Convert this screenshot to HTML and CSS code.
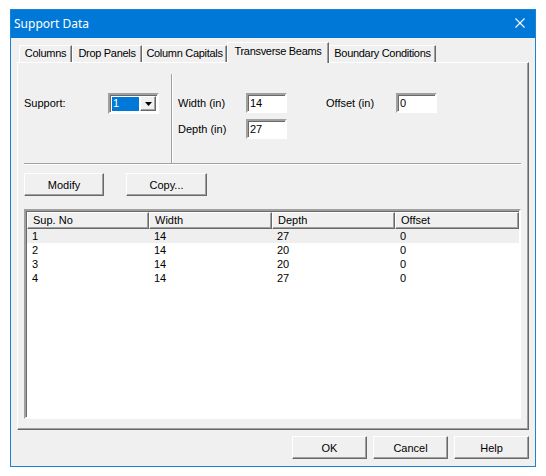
FILE: index.html
```html
<!DOCTYPE html>
<html lang="en">

<head>
    <meta charset="UTF-8">
    <title>Support Data</title>
    <link rel="stylesheet" href="styles.css">
</head>

<body>
    <div class="window">
        <div class="titlebar">
            <span class="title">Support Data</span>
            <svg class="close" width="10" height="10" viewBox="0 0 10 10">
                <path d="M0.5 0.5L9.5 9.5M9.5 0.5L0.5 9.5" stroke="#fff" stroke-width="1.1" fill="none"/>
            </svg>
        </div>
        <div class="client">
            <div class="tabs">
                <div class="tab">Columns</div>
                <div class="tab">Drop Panels</div>
                <div class="tab">Column Capitals</div>
                <div class="tab active">Transverse Beams</div>
                <div class="tab">Boundary Conditions</div>
            </div>
            <div class="panel">
                <div class="top">
                    <div class="support">
                        <span class="support-label">Support:</span>
                        <div class="combo">
                            <span class="combo-value">1</span>
                            <span class="combo-btn">
                                <svg width="7" height="4" viewBox="0 0 7 4"><polygon points="0,0 7,0 3.5,4" fill="#000"/></svg>
                            </span>
                        </div>
                    </div>
                    <div class="dims">
                        <span>Width (in)</span>
                        <div class="field">14</div>
                        <span></span>
                        <span>Offset (in)</span>
                        <div class="field">0</div>
                        <span>Depth (in)</span>
                        <div class="field">27</div>
                    </div>
                </div>
                <div class="actions">
                    <button class="btn">Modify</button>
                    <button class="btn copy">Copy...</button>
                </div>
                <div class="list">
                    <div class="list-head">
                        <div class="hcell">Sup. No</div>
                        <div class="hcell">Width</div>
                        <div class="hcell">Depth</div>
                        <div class="hcell">Offset</div>
                    </div>
                    <div class="row focused"><span>1</span><span>14</span><span>27</span><span>0</span></div>
                    <div class="row"><span>2</span><span>14</span><span>20</span><span>0</span></div>
                    <div class="row"><span>3</span><span>14</span><span>20</span><span>0</span></div>
                    <div class="row"><span>4</span><span>14</span><span>27</span><span>0</span></div>
                </div>
            </div>
            <div class="footer">
                <button class="btn">OK</button>
                <button class="btn">Cancel</button>
                <button class="btn">Help</button>
            </div>
        </div>
    </div>
</body>

</html>
```

FILE: styles.css
```css
* {
    box-sizing: border-box;
}

body {
    margin: 0;
    background: #fff;
    font-family: "Liberation Sans", Arial, sans-serif;
    font-size: 11px;
    color: #000;
}

.window {
    margin: 9px 0 0 10px;
    width: 526px;
    height: 458px;
    border: 1px solid #1883d7;
    background: #f0f0f0;
    display: flex;
    flex-direction: column;
}

.titlebar {
    height: 28px;
    background: #0078d7;
    color: #fff;
    display: flex;
    align-items: center;
    justify-content: space-between;
    padding: 0 10px 2px 3px;
}

.title {
    font-family: "Noto Sans", sans-serif;
    font-size: 12px;
}

.client {
    flex: 1;
    padding: 4px 6px 0 6px;
}

/* tab strip */
.tabs {
    display: flex;
    align-items: flex-end;
    height: 20px;
    padding-left: 2px;
}

.tab {
    height: 17px;
    line-height: 15px;
    text-align: center;
    white-space: nowrap;
    letter-spacing: -0.3px;
    border: 1px solid;
    border-color: #fff #696969 transparent #fff;
    border-bottom: none;
    box-shadow: inset -1px 0 #a0a0a0;
}

.tab:nth-child(1) { width: 53px; }
.tab:nth-child(2) { width: 70px; }
.tab:nth-child(3) { width: 85px; }
.tab:nth-child(4) { width: 102px; }
.tab:nth-child(5) { width: 107px; }

.tab.active {
    height: 21px;
    line-height: 17px;
    margin-bottom: -1px;
    position: relative;
    z-index: 1;
    background: #f0f0f0;
}

.panel {
    height: 368px;
    border: 1px solid;
    border-color: #fff #696969 #696969 #fff;
    box-shadow: inset -1px -1px #a0a0a0;
    padding: 11px 7px 0 6px;
}

/* support + dimensions */
.top {
    display: flex;
    height: 90px;
    border-bottom: 1px solid #a0a0a0;
    box-shadow: 0 1px #fff;
}

.support {
    width: 148px;
    display: flex;
    align-items: flex-start;
    padding-top: 19px;
    border-right: 1px solid #a0a0a0;
    box-shadow: 1px 0 #fff;
}

.support-label {
    width: 84px;
    line-height: 21px;
}

.combo {
    width: 51px;
    height: 21px;
    display: flex;
    padding: 1px;
    background: #fff;
    border: 2px solid;
    border-color: #a0a0a0 #fff #fff #a0a0a0;
    box-shadow: inset 1px 1px #696969;
}

.combo-value {
    flex: 1;
    margin: 1px 1px 0 1px;
    background: #0078d7;
    color: #fff;
    line-height: 13px;
    padding-left: 1px;
}

.combo-btn {
    width: 16px;
    display: flex;
    align-items: center;
    justify-content: center;
    background: #f0f0f0;
    border: 1px solid;
    border-color: #fff #696969 #696969 #fff;
    box-shadow: inset -1px -1px #a0a0a0;
}

.dims {
    padding: 19px 0 0 6px;
    display: grid;
    grid-template-columns: 68px 41px 39px 70px 41px;
    grid-auto-rows: 20px;
    row-gap: 6px;
    align-items: center;
    align-content: start;
}

.field {
    height: 20px;
    background: #fff;
    border: 2px solid;
    border-color: #a0a0a0 #fff #fff #a0a0a0;
    box-shadow: inset 1px 1px #696969;
    padding-left: 2px;
    line-height: 16px;
}

/* buttons */
.btn {
    height: 23px;
    width: 75px;
    padding: 0;
    font: inherit;
    color: #000;
    background: #f0f0f0;
    border: 1px solid;
    border-color: #fff #696969 #696969 #fff;
    box-shadow: inset -1px -1px #a0a0a0;
}

.actions {
    display: flex;
    gap: 22px;
    margin-top: 9px;
}

.actions .btn {
    width: 80px;
}

.actions .copy {
    width: 81px;
}

/* list view */
.list {
    margin-top: 13px;
    height: 210px;
    background: #fff;
    border: 2px solid;
    border-color: #a0a0a0 #fff #fff #a0a0a0;
    box-shadow: inset 1px 1px #696969;
    padding: 1px 0 0 1px;
}

.list-head,
.row {
    display: grid;
    grid-template-columns: 122px 123px 123px 124px;
}

.list-head {
    height: 17px;
}

.hcell {
    background: #f0f0f0;
    border: 1px solid;
    border-color: #fff #696969 #696969 #fff;
    box-shadow: inset -1px -1px #a0a0a0;
    padding-left: 5px;
    line-height: 14px;
}

.row {
    height: 14px;
    line-height: 14px;
}

.row span {
    padding-left: 5px;
}

.row.focused {
    background: #efefef;
}

.footer {
    display: flex;
    justify-content: flex-end;
    gap: 6px;
    margin-top: 6px;
}
```
